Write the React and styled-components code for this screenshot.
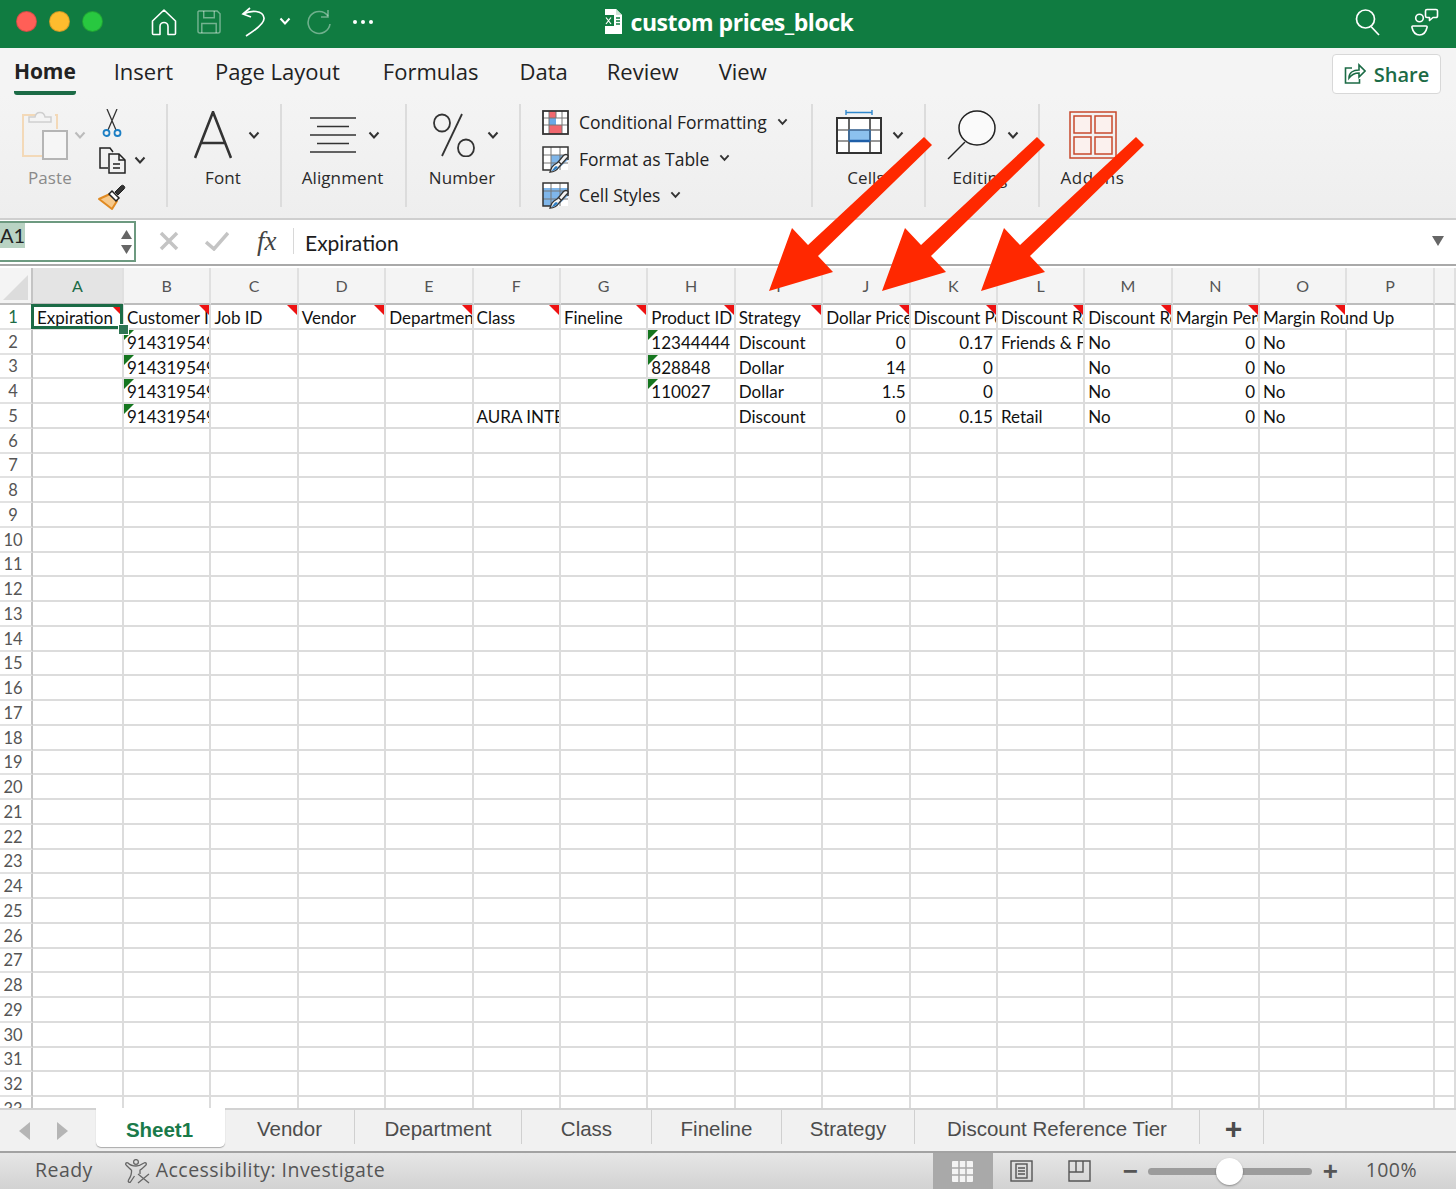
import React from "react";
import styled, { createGlobalStyle } from "styled-components";

const GlobalStyle = createGlobalStyle`
  html, body { margin: 0; padding: 0; background: #fff; }
  * { box-sizing: border-box; }
`;

const UI = `"Open Sans", "Noto Sans", sans-serif`;
const GREEN = "#107c41";

const Window = styled.div`
  position: relative;
  width: 1456px;
  height: 1189px;
  overflow: hidden;
  display: flex;
  flex-direction: column;
  font-family: ${UI};
`;

const TitleBar = styled.header`
  height: 48px;
  flex: none;
  background: ${GREEN};
  display: grid;
  grid-template-columns: 1fr auto 1fr;
  align-items: center;
  color: #fff;
`;
const TitleLeft = styled.div`
  display: flex;
  align-items: center;
  padding: 0 0 5px 16px;
`;
const Light = styled.span`
  width: 21px;
  height: 21px;
  border-radius: 50%;
  margin-right: 12px;
  background: ${({ $c }) => $c};
  border: 1px solid rgba(0, 0, 0, 0.18);
`;
const QuickTools = styled.div`
  display: flex;
  align-items: center;
  gap: 20px;
  margin-left: 36px;
`;
const QuickChevron = styled.span`
  display: flex;
  margin: 0 -5px 0 -8px;
`;
const TitleText = styled.div`
  display: flex;
  align-items: center;
  gap: 8px;
  padding-bottom: 5px;
  font-size: 23px;
  font-weight: 700;
  letter-spacing: -0.45px;
`;
const TitleRight = styled.div`
  display: flex;
  justify-content: flex-end;
  align-items: center;
  gap: 30px;
  padding: 0 17px 4px 0;
`;

const TabBar = styled.nav`
  height: 47px;
  flex: none;
  background: #f4f4f4;
  display: flex;
  align-items: flex-start;
  padding-left: 14px;
  position: relative;
`;
const RibbonTab = styled.div`
  height: 47px;
  padding-top: 7px;
  margin-right: ${({ $mr }) => $mr}px;
  font-size: ${({ $on }) => ($on ? "21px" : "22px")};
  line-height: 32px;
  color: #222;
  font-weight: ${({ $on }) => ($on ? 700 : 500)};
  border-bottom: ${({ $on }) => ($on ? `4px solid #1c6b46` : "none")};
  border-radius: 0 0 3px 3px;
  letter-spacing: ${({ $on }) => ($on ? "-0.1px" : "0")};
`;
const ShareButton = styled.button`
  margin: 6px 15px 0 auto;
  width: 109px;
  height: 40px;
  background: #fff;
  border: 1px solid #d8d8d8;
  border-radius: 4px;
  display: flex;
  align-items: center;
  justify-content: center;
  gap: 8px;
  font-family: ${UI};
  font-size: 20px;
  font-weight: 600;
  color: #1c6b46;
`;

const Ribbon = styled.section`
  height: 125px;
  flex: none;
  background: linear-gradient(#f4f4f4, #eeeeee);
  border-bottom: 2px solid #cfcfcf;
  padding-top: 9px;
  display: flex;
  align-items: flex-start;
`;
const Group = styled.div`
  width: ${({ $w }) => $w}px;
  height: 103px;
  flex: none;
  border-right: ${({ $last }) => ($last ? "none" : "2px solid #dcdcdc")};
  display: flex;
  flex-direction: column;
  align-items: center;
`;
const IconRow = styled.div`
  height: 62px;
  display: flex;
  align-items: ${({ $top }) => ($top ? "flex-start" : "center")};
  padding-top: ${({ $top }) => ($top ? "6px" : "0")};
  gap: ${({ $gap }) => $gap ?? 14}px;
  margin-left: ${({ $shift }) => $shift ?? 0}px;
`;
const MidChevron = styled.span`
  display: flex;
  margin-top: 21px;
`;
const GroupLabel = styled.div`
  font-size: 17px;
  line-height: 24px;
  color: ${({ $dim }) => ($dim ? "#8a8a8a" : "#2a2a2a")};
  letter-spacing: ${({ $wide }) => ($wide ? "0.6px" : "0.1px")};
  margin-left: ${({ $x }) => $x ?? 0}px;
`;
const ClipGroup = styled.div`
  width: 168px;
  height: 103px;
  flex: none;
  border-right: 2px solid #dcdcdc;
  display: flex;
  padding-left: 21px;
`;
const PasteCol = styled.div`
  width: 70px;
  display: flex;
  flex-direction: column;
`;
const PasteIcons = styled.div`
  height: 62px;
  display: flex;
  align-items: center;
  gap: 5px;
`;
const ClipTools = styled.div`
  margin-left: 7px;
  display: flex;
  flex-direction: column;
  align-items: flex-start;
  gap: 10px;
  padding-top: 5px;
`;
const ClipTool = styled.div`
  display: flex;
  align-items: center;
  gap: 8px;
  margin-left: ${({ $x }) => $x ?? 0}px;
`;
const StyleList = styled.div`
  display: flex;
  flex-direction: column;
  gap: 8.5px;
  padding: 4px 0 0 21px;
  width: 100%;
`;
const StyleRow = styled.div`
  display: flex;
  align-items: center;
  height: 28px;
  font-size: 17.5px;
  color: #222;
`;
const StyleName = styled.span`
  margin: 0 10px 0 10px;
`;

const FormulaBar = styled.section`
  height: 46px;
  flex: none;
  background: #fff;
  border-bottom: 2px solid #a9a9a9;
  display: flex;
  align-items: center;
  padding-bottom: 2px;
`;
const NameBox = styled.div`
  width: 136px;
  height: 41px;
  margin-top: 1px;
  border: 2px solid #6d9a80;
  border-left: none;
  display: flex;
  justify-content: space-between;
  font-family: "Lato", sans-serif;
  font-size: 20px;
  color: #222;
`;
const NameText = styled.span`
  height: 25px;
  line-height: 24px;
  background: #b9d3c3;
`;
const Spinner = styled.div`
  display: flex;
  flex-direction: column;
  justify-content: center;
  gap: 6px;
  padding-right: 2px;
`;
const FormulaActions = styled.div`
  display: flex;
  align-items: center;
  gap: 26px;
  margin-left: 23px;
`;
const FormulaDivider = styled.span`
  width: 1px;
  height: 26px;
  background: #d8d8d8;
  margin-left: 10px;
`;
const Fx = styled.span`
  font-family: "Liberation Serif", serif;
  font-style: italic;
  font-size: 27px;
  color: #444;
  width: 26px;
  margin-left: 2px;
`;
const FormulaValue = styled.div`
  margin: 3px 0 0 11px;
  flex: 1;
  font-family: "Lato", sans-serif;
  font-size: 21px;
  color: #1c1c1c;
`;
const Dropdown = styled.span`
  width: 0;
  height: 0;
  margin-right: 12px;
  border-left: 6px solid transparent;
  border-right: 6px solid transparent;
  border-top: 10px solid #666;
`;

const Sheet = styled.main`
  flex: 1;
  min-height: 0;
  overflow: hidden;
  margin-top: 2px;
  background: #fff;
  display: grid;
  grid-template-columns: 33px 91px repeat(15, 87.4px) 1fr;
  grid-template-rows: 37px;
  grid-auto-rows: 24.75px;
  font-family: "Lato", sans-serif;
`;
const Corner = styled.div`
  background: #f4f4f4;
  border-right: 2px solid #c4c4c4;
  border-bottom: 2px solid #bdbdbd;
  position: relative;
  &::after {
    content: "";
    position: absolute;
    left: 3px;
    top: 7px;
    border-left: 25px solid transparent;
    border-bottom: 25px solid #dcdcdc;
  }
`;
const ColHead = styled.div`
  background: ${({ $on }) => ($on ? "#e4e4e4" : "#f4f4f4")};
  border-right: 2px solid #e0e0e0;
  border-bottom: 2px solid #bdbdbd;
  display: flex;
  align-items: center;
  justify-content: center;
  font-size: 16px;
  padding-bottom: 1px;
  color: ${({ $on }) => ($on ? "#1c6b46" : "#555")};
`;
const RowHead = styled.div`
  background: #fff;
  border-right: 2px solid #c4c4c4;
  border-bottom: 2px solid #e2e2e2;
  display: flex;
  align-items: center;
  justify-content: center;
  padding: 1px 5px 0 0;
  font-size: 16.5px;
  color: ${({ $on }) => ($on ? "#1c6b46" : "#555")};
`;
const Cell = styled.div`
  position: relative;
  border-right: 2px solid #dcdcdc;
  border-bottom: 2px solid #dcdcdc;
  padding: 1px 3px 0 3px;
  font-size: 17px;
  line-height: 23px;
  color: #111;
  white-space: nowrap;
  overflow: ${({ $spill }) => ($spill ? "visible" : "hidden")};
  text-align: ${({ $right }) => ($right ? "right" : "left")};
  ${({ $spill }) => $spill && "border-right-color: transparent;"}
  &::before {
    content: ${({ $note }) => ($note ? '""' : "none")};
    position: absolute;
    top: 0;
    right: 0;
    border-left: 10px solid transparent;
    border-top: 10px solid #ee1111;
  }
  &::after {
    content: ${({ $flag }) => ($flag ? '""' : "none")};
    position: absolute;
    top: 0;
    left: 0;
    border-right: 10px solid transparent;
    border-top: 10px solid #15761f;
  }
`;
const Selection = styled.div`
  position: absolute;
  inset: -1px -1px -1px -2px;
  border: 3px solid #1c6b46;
  pointer-events: none;
`;
const Handle = styled.span`
  position: absolute;
  right: -7px;
  bottom: -7px;
  width: 11px;
  height: 11px;
  background: #2f7553;
  border: 1px solid #fff;
`;
const SelectedCell = styled(Cell)`
  overflow: visible;
  padding-left: 4px;
  z-index: 2;
  &::before {
    border-left-width: 7px;
    border-top-width: 7px;
    right: 2px;
    top: 2px;
  }
`;

const SheetTabs = styled.div`
  height: 43px;
  flex: none;
  background: #f1f1f1;
  border-top: 2px solid #d2d2d2;
  display: flex;
  align-items: flex-start;
  font-family: "Liberation Sans", sans-serif;
  font-size: 20.5px;
  color: #4c4c4c;
`;
const TabNav = styled.div`
  width: 96px;
  height: 41px;
  display: flex;
  align-items: center;
  justify-content: center;
  gap: 27px;
  padding-right: 10px;
  flex: none;
`;
const SheetTab = styled.div`
  width: ${({ $w }) => $w}px;
  flex: none;
  display: flex;
  align-items: center;
  justify-content: center;
  margin-top: ${({ $on }) => ($on ? "-2px" : "0")};
  height: ${({ $on }) => ($on ? "39px" : "34px")};
  padding: ${({ $on }) => ($on ? "4px 2px 0 0" : "4px 0 0 0")};
  background: ${({ $on }) => ($on ? "#fff" : "transparent")};
  color: ${({ $on }) => ($on ? "#1a7a4a" : "inherit")};
  font-weight: ${({ $on }) => ($on ? 700 : 400)};
  border-right: ${({ $on }) => ($on ? "none" : "1.5px solid #d0d0d0")};
  border-radius: ${({ $on }) => ($on ? "0 0 5px 5px" : "0")};
  box-shadow: ${({ $on }) => ($on ? "0 1px 1px #aaa" : "none")};
`;
const PlusTab = styled(SheetTab)`
  font-size: 30px;
  font-weight: 700;
  line-height: 1;
  padding-left: 4px;
`;

const StatusBar = styled.footer`
  height: 38px;
  flex: none;
  background: linear-gradient(#e6e6e6, #d2d2d2);
  border-top: 2px solid #a2a2a2;
  display: flex;
  align-items: center;
  padding-left: 35px;
  font-size: 19.5px;
  letter-spacing: 0.45px;
  color: #555;
`;
const StatusText = styled.span`
  padding-bottom: 3px;
`;
const Investigate = styled.div`
  display: flex;
  align-items: center;
  gap: 5px;
  margin-left: 32px;
`;
const ViewButton = styled.div`
  width: ${({ $w }) => $w}px;
  height: 36px;
  flex: none;
  display: flex;
  align-items: center;
  justify-content: center;
  background: ${({ $on }) => ($on ? "#a9a9a9" : "transparent")};
`;
const ViewRow = styled.div`
  margin-left: auto;
  display: flex;
  align-items: center;
`;
const ZoomRow = styled.div`
  display: flex;
  align-items: center;
  margin-left: 14px;
  gap: 11px;
  padding-right: 39px;
`;
const ZoomMark = styled.span`
  font-family: "Liberation Sans", sans-serif;
  font-weight: 700;
  font-size: 26px;
  line-height: 1;
  color: #555;
  width: 14px;
  text-align: center;
`;
const Slider = styled.div`
  position: relative;
  width: 164px;
  height: 7px;
  background: #9c9c9c;
  border-radius: 4px;
`;
const Thumb = styled.span`
  position: absolute;
  left: 68px;
  top: -10px;
  width: 27px;
  height: 27px;
  border-radius: 50%;
  background: #fff;
  box-shadow: 0 1px 2px rgba(0, 0, 0, 0.35);
`;
const ZoomValue = styled(StatusText)`
  margin-left: 18px;
`;

const Arrows = styled.svg`
  position: absolute;
  inset: 0;
  pointer-events: none;
`;

/* icons */
const Chevron = ({ c = "#333", s = 12 }) => (
  <svg width={s} height={s * 0.75} viewBox="0 0 12 9" fill="none" stroke={c} strokeWidth="2">
    <path d="M1.5 1.5 6 6.5l4.5-5" />
  </svg>
);
const HomeIcon = () => (
  <svg width="26" height="28" viewBox="0 0 26 28" fill="none" stroke="#fff" strokeWidth="1.6" strokeLinejoin="round">
    <path d="M1.5 13 13 2l11.5 11v12.5a1 1 0 0 1-1 1H17v-8a4 4 0 0 0-8 0v8H2.500a1 1 0 0 1-1-1z" />
  </svg>
);
const SaveIcon = () => (
  <svg width="24" height="24" viewBox="0 0 25 25" fill="none" stroke="#fff" strokeOpacity=".42" strokeWidth="1.5">
    <path d="M2 1h19l3 3v18a2 2 0 0 1-2 2H3a2 2 0 0 1-2-2V2z" />
    <path d="M7 1v7h11V1M5 24V14h15v10" />
  </svg>
);
const UndoIcon = () => (
  <svg width="26" height="30" viewBox="0 0 26 30" fill="none" stroke="#fff" strokeWidth="1.7">
    <path d="M9 1 2 7l8 3" />
    <path d="M2 7c8-4 20-4 21 4 .6 5-10 13-18 18" />
  </svg>
);
const RedoIcon = () => (
  <svg width="26" height="26" viewBox="0 0 26 26" fill="none" stroke="#fff" strokeOpacity=".4" strokeWidth="1.6">
    <path d="M22 7A11 11 0 1 0 24 15" />
    <path d="M22 1v7h-7" />
  </svg>
);
const Dots = () => (
  <svg width="22" height="6" viewBox="0 0 22 6" fill="#fff">
    <circle cx="3" cy="3" r="2" />
    <circle cx="11" cy="3" r="2" />
    <circle cx="19" cy="3" r="2" />
  </svg>
);
const DocIcon = () => (
  <svg width="20" height="25" viewBox="0 0 20 25">
    <path d="M2 0h11l6 6v19H2z" fill="#fff" />
    <path d="M13 0v6h6z" fill="#cfe5d8" />
    <rect x="0" y="6" width="11" height="11" fill={GREEN} />
    <path d="M3 8.500 8 15M8 8.500 3 15" stroke="#fff" strokeWidth="1.2" />
    <path d="M13 9h4M13 12h4M13 15h4" stroke={GREEN} strokeWidth="1.300" />
  </svg>
);
const SearchIcon = () => (
  <svg width="26" height="28" viewBox="0 0 26 28" fill="none" stroke="#fff" strokeWidth="1.700">
    <circle cx="10.500" cy="11" r="9" />
    <path d="m16 18.500 8 8.500" />
  </svg>
);
const PeopleIcon = () => (
  <svg width="28" height="28" viewBox="0 0 28 28" fill="none" stroke="#fff" strokeWidth="1.600" strokeLinejoin="round">
    <circle cx="8.500" cy="10" r="3.800" />
    <path d="M2 18h13c1 0 1.300.6 1 1.500C15 24 12 27 8.500 27S2 24 1 19.500C.8 18.600 1 18 2 18z" />
    <path d="M16 1.500h9a1.500 1.500 0 0 1 1.500 1.500v5A1.500 1.500 0 0 1 25 9.500h-3l-3.500 3v-3H16A1.500 1.500 0 0 1 14.500 8V3A1.500 1.500 0 0 1 16 1.500z" />
  </svg>
);
const ShareIcon = () => (
  <svg width="22" height="22" viewBox="0 0 22 22" fill="none" stroke="#1c6b46" strokeWidth="1.600">
    <path d="M8 5H1.500v15h14v-4" />
    <path d="M5 15c0-5 4-8 10-8V2l6 6-6 6V10c-4 0-7 1-10 5z" fill="#fff" />
  </svg>
);
const PasteIcon = () => (
  <svg width="48" height="50" viewBox="0 0 48 50" fill="none">
    <path d="M16 5H2v41h22" stroke="#f3d9b8" strokeWidth="2" />
    <path d="M34 5h2v14" stroke="#f3d9b8" strokeWidth="2" />
    <path d="M8 12V7h6c1-6 9-6 10 0h6v5z" fill="#f4f4f4" stroke="#cfcfcf" strokeWidth="1.500" />
    <rect x="22" y="21" width="24" height="28" fill="#f6f6f6" stroke="#b5b5b5" strokeWidth="2" />
  </svg>
);
const ScissorsIcon = () => (
  <svg width="20" height="28" viewBox="0 0 20 28" fill="none">
    <path d="M5 0l9 21M15 0 6 21" stroke="#333" strokeWidth="1.300" />
    <circle cx="4.500" cy="24" r="3" stroke="#1c7fc4" strokeWidth="1.800" />
    <circle cx="15.500" cy="24" r="3" stroke="#1c7fc4" strokeWidth="1.800" />
  </svg>
);
const CopyIcon = () => (
  <svg width="28" height="27" viewBox="0 0 28 27" fill="none" stroke="#222" strokeWidth="1.500">
    <path d="M10 21H2V1h10l3 4" />
    <path d="M11 7h10l6 6v13H11z" fill="#f2f2f2" />
    <path d="M21 7v6h6M15 17h7M15 21h7" />
  </svg>
);
const BrushIcon = () => (
  <svg width="28" height="26" viewBox="0 0 28 26" fill="none">
    <path d="M1 15l11-5 7 7-5 8z" fill="#f7c98b" stroke="#e08a22" strokeWidth="2" strokeLinejoin="round" />
    <path d="M11 10l3-3 7 7-3 3z" fill="#fff" stroke="#222" strokeWidth="1.500" />
    <path d="M17 8l6-6c1-1 2-1 3 0s1 2 0 3l-6 6z" fill="#333" stroke="#222" strokeWidth="1" />
  </svg>
);
const FontIcon = () => (
  <svg width="38" height="48" viewBox="0 0 38 48" fill="none" stroke="#333" strokeWidth="2.600">
    <path d="M1 47 19 1l18 46M7 32h24" />
  </svg>
);
const AlignIcon = () => (
  <svg width="48" height="36" viewBox="0 0 48 36" stroke="#333" strokeWidth="1.500">
    <path d="M1 1h46M8 9.500h32M1 18h46M8 26.500h32M1 35h46" />
  </svg>
);
const PercentIcon = () => (
  <svg width="42" height="44" viewBox="0 0 42 44" fill="none" stroke="#333" strokeWidth="1.800">
    <ellipse cx="9" cy="10" rx="8" ry="8.500" />
    <ellipse cx="33" cy="35" rx="8" ry="8.500" />
    <path d="M29 1 9 43" />
  </svg>
);
const CondIcon = () => (
  <svg width="27" height="25" viewBox="0 0 27 25" fill="#fff">
    <rect x="1" y="1" width="25" height="23" />
    <rect x="7" y="1" width="7" height="7" fill="#f0676e" />
    <rect x="7" y="8" width="7" height="7" fill="#6aa9e6" />
    <rect x="14" y="8" width="6" height="7" fill="#fff" />
    <rect x="7" y="15" width="13" height="9" fill="#f0676e" />
    <path d="M14 1v7M1 8h25M1 15h25M7 1v23M20 1v23" stroke="#777" strokeWidth="1" />
    <rect x="1" y="1" width="25" height="23" fill="none" stroke="#333" strokeWidth="1.800" />
  </svg>
);
const TableStyleIcon = ({ full }) => (
  <svg width="27" height="28" viewBox="0 0 27 28" fill="#fff">
    <rect x="1" y="2" width="25" height="23" />
    <path d={full ? "M1 7h25v8L15 25H1z" : "M9 10h17v5L15 25H9z"} fill="#7fb6ea" />
    <path d="M1 10h25M1 18h25M9 2v23M18 2v23" stroke="#777" strokeWidth="1" fill="none" />
    <path d="M26 15V2H1v23h12" fill="none" stroke="#333" strokeWidth="1.500" />
    <path d="M21 11c1-1 3-2 4.500-1 1 1 .5 2-.5 3l-8 9c-2 3-5 5-9 5 1-2 1-5 4-7 2-1 4-2 5-4z" fill="#f4f4f4" stroke="#333" strokeWidth="1.300" />
    <path d="M16 16l3 3" stroke="#333" strokeWidth="1.300" />
    <path d="M9 26c2-1 3-4 5-5l2 1c-1 2-4 4-7 4z" fill="#2f7fc4" />
  </svg>
);
const CellsIcon = () => (
  <svg width="46" height="44" viewBox="0 0 46 44" fill="none">
    <path d="M10 2.500h26M10 0v5M36 0v5" stroke="#2f87cc" strokeWidth="1.400" />
    <rect x="1" y="8" width="44" height="35" fill="#fff" />
    <rect x="13" y="20" width="21" height="11" fill="#8cc1ee" />
    <path d="M1 20h44M1 31h44" stroke="#777" strokeWidth="1.600" />
    <path d="M13 8v35M34 8v35" stroke="#666" strokeWidth="2" />
    <path d="M13 31h21" stroke="#1f5fa8" strokeWidth="2.500" />
    <path d="M13 20h21M13 20v11M34 20v11" stroke="#2a6fb5" strokeWidth="1.200" />
    <rect x="1" y="8" width="44" height="35" stroke="#333" strokeWidth="2" />
  </svg>
);
const LensIcon = () => (
  <svg width="50" height="50" viewBox="0 0 50 50" fill="none" stroke="#222" strokeWidth="1.500">
    <ellipse cx="30" cy="18" rx="18" ry="17" fill="#fafafa" />
    <path d="M18 32 1 49" />
  </svg>
);
const AddInsIcon = () => (
  <svg width="48" height="48" viewBox="0 0 48 48" fill="none" stroke="#c8492d" strokeWidth="1.500">
    <rect x="1" y="1" width="46" height="46" />
    <rect x="5" y="5" width="17" height="17" fill="#fbf1ee" />
    <rect x="26" y="5" width="17" height="17" fill="#fbf1ee" />
    <rect x="5" y="26" width="17" height="17" fill="#fbf1ee" />
    <rect x="26" y="26" width="17" height="17" fill="#fbf1ee" />
  </svg>
);
const CloseMark = () => (
  <svg width="20" height="20" viewBox="0 0 20 20" stroke="#c4c4c4" strokeWidth="3.500">
    <path d="M2 2l16 16M18 2 2 18" />
  </svg>
);
const CheckMark = () => (
  <svg width="24" height="20" viewBox="0 0 24 20" fill="none" stroke="#c4c4c4" strokeWidth="3.500">
    <path d="M1 11l8 7L23 2" />
  </svg>
);
const Tri = ({ dir, c = "#666", w = 10, h = 8 }) => {
  const pts = {
    up: `0,${h} ${w},${h} ${w / 2},0`,
    down: `0,0 ${w},0 ${w / 2},${h}`,
    left: `${w},0 ${w},${h} 0,${h / 2}`,
    right: `0,0 0,${h} ${w},${h / 2}`,
  };
  return (
    <svg width={w} height={h} viewBox={`0 0 ${w} ${h}`}>
      <polygon points={pts[dir]} fill={c} />
    </svg>
  );
};
const AccessIcon = () => (
  <svg width="26" height="25" viewBox="0 0 26 25" fill="none" stroke="#666" strokeWidth="1.300" strokeLinejoin="round">
    <circle cx="11" cy="3" r="2.400" />
    <path d="M1 6c-1-2 1-3 2-2 2 2 5 3 8 3s5-1 8-3c1-1 3 0 2 2-2 2-4 4-6 5v4" />
    <path d="M6.500 11c.5 4-1 7-3 10-1 2 1 3 2 2l4-6" />
    <path d="M6.500 11C5 10 3 8 1 6" />
    <path d="M13 15l11 9M24 15l-11 9" />
  </svg>
);
const GridView = () => (
  <svg width="21" height="21" viewBox="0 0 21 21">
    <rect width="21" height="21" rx="1" fill="#f4f4f4" />
    <path d="M7 0v21M14 0v21M0 7h21M0 14h21" stroke="#a9a9a9" strokeWidth="1.500" />
  </svg>
);
const PageView = () => (
  <svg width="23" height="22" viewBox="0 0 23 22" fill="none" stroke="#555" strokeWidth="1.400">
    <rect x="1" y="1" width="21" height="20" />
    <rect x="6" y="4" width="11" height="14" />
    <path d="M8 8h7M8 11h7M8 14h7" />
  </svg>
);
const BreakView = () => (
  <svg width="23" height="22" viewBox="0 0 23 22" fill="none" stroke="#555" strokeWidth="1.400">
    <path d="M1 1h21v20H1zM1 12h14V1M8 1v11" />
  </svg>
);

const COLS = "ABCDEFGHIJKLMNOP".split("");
const RIBBON_TABS = [
  ["Home", 38], ["Insert", 42], ["Page Layout", 43], ["Formulas", 41], ["Data", 39], ["Review", 40], ["View", 0],
];
const HEADERS = [
  "Expiration", "Customer ID", "Job ID", "Vendor", "Department", "Class", "Fineline", "Product ID",
  "Strategy", "Dollar Price", "Discount Percent", "Discount Reference", "Discount Round", "Margin Percent", "Margin Round Up", "",
];
const ID = "9143195499";
// sparse body: col index -> [text, right aligned, green flag]
const DATA = {
  2: { 1: [ID, 0, 1], 7: ["12344444", 0, 1], 8: ["Discount"], 9: ["0", 1], 10: ["0.17", 1], 11: ["Friends & Family"], 12: ["No"], 13: ["0", 1], 14: ["No"] },
  3: { 1: [ID, 0, 1], 7: ["828848", 0, 1], 8: ["Dollar"], 9: ["14", 1], 10: ["0", 1], 12: ["No"], 13: ["0", 1], 14: ["No"] },
  4: { 1: [ID, 0, 1], 7: ["110027", 0, 1], 8: ["Dollar"], 9: ["1.5", 1], 10: ["0", 1], 12: ["No"], 13: ["0", 1], 14: ["No"] },
  5: { 1: [ID, 0, 1], 5: ["AURA INTERIORS"], 8: ["Discount"], 9: ["0", 1], 10: ["0.15", 1], 11: ["Retail"], 12: ["No"], 13: ["0", 1], 14: ["No"] },
};
const ROWS = Array.from({ length: 33 }, (_, i) => i + 1);
const TABS = [
  ["Sheet1", 129, true], ["Vendor", 130], ["Department", 167], ["Class", 130], ["Fineline", 130], ["Strategy", 133], ["Discount Reference Tier", 285],
];

const Arrow = ({ dx }) => (
  <polygon
    fill="#ff2800"
    transform={`translate(${dx} 0)`}
    points="924,137 932,145 818,256 833,272 769,291 792,228 808,245"
  />
);

export default function App() {
  return (
    <Window>
      <GlobalStyle />
      <TitleBar>
        <TitleLeft>
          <Light $c="#ff5f57" />
          <Light $c="#febc2e" />
          <Light $c="#28c840" />
          <QuickTools>
            <HomeIcon />
            <SaveIcon />
            <UndoIcon />
            <QuickChevron><Chevron c="#fff" /></QuickChevron>
            <RedoIcon />
            <Dots />
          </QuickTools>
        </TitleLeft>
        <TitleText>
          <DocIcon />
          custom prices_block
        </TitleText>
        <TitleRight>
          <SearchIcon />
          <PeopleIcon />
        </TitleRight>
      </TitleBar>

      <TabBar>
        {RIBBON_TABS.map(([t, mr], i) => (
          <RibbonTab key={t} $on={i === 0} $mr={mr}>{t}</RibbonTab>
        ))}
        <ShareButton>
          <ShareIcon />
          Share
        </ShareButton>
      </TabBar>

      <Ribbon>
        <ClipGroup>
          <PasteCol>
            <PasteIcons>
              <PasteIcon />
              <Chevron c="#bbb" />
            </PasteIcons>
            <GroupLabel $dim $x={7}>Paste</GroupLabel>
          </PasteCol>
          <ClipTools>
            <ClipTool $x={4}><ScissorsIcon /></ClipTool>
            <ClipTool>
              <CopyIcon />
              <Chevron />
            </ClipTool>
            <ClipTool><BrushIcon /></ClipTool>
          </ClipTools>
        </ClipGroup>
        <Group $w={114}>
          <IconRow $gap={16} $shift={6}><FontIcon /><Chevron /></IconRow>
          <GroupLabel $x={-2}>Font</GroupLabel>
        </Group>
        <Group $w={125}>
          <IconRow $gap={11} $shift={2}><AlignIcon /><Chevron /></IconRow>
          <GroupLabel $x={-2}>Alignment</GroupLabel>
        </Group>
        <Group $w={114}>
          <IconRow $gap={12} $shift={6}><PercentIcon /><Chevron /></IconRow>
          <GroupLabel $x={-2}>Number</GroupLabel>
        </Group>
        <Group $w={292}>
          <StyleList>
            <StyleRow><CondIcon /><StyleName>Conditional Formatting</StyleName><Chevron s={11} /></StyleRow>
            <StyleRow><TableStyleIcon /><StyleName>Format as Table</StyleName><Chevron s={11} /></StyleRow>
            <StyleRow><TableStyleIcon full /><StyleName>Cell Styles</StyleName><Chevron s={11} /></StyleRow>
          </StyleList>
        </Group>
        <Group $w={113}>
          <IconRow $top $gap={10} $shift={3}><CellsIcon /><MidChevron><Chevron /></MidChevron></IconRow>
          <GroupLabel $x={-5}>Cells</GroupLabel>
        </Group>
        <Group $w={114}>
          <IconRow $gap={10} $shift={2}><LensIcon /><Chevron /></IconRow>
          <GroupLabel $x={-4}>Editing</GroupLabel>
        </Group>
        <Group $w={106} $last>
          <IconRow><AddInsIcon /></IconRow>
          <GroupLabel $x={-1} $wide>Add-ins</GroupLabel>
        </Group>
      </Ribbon>

      <FormulaBar>
        <NameBox>
          <NameText>A1</NameText>
          <Spinner>
            <Tri dir="up" w={11} h={9} />
            <Tri dir="down" w={11} h={9} />
          </Spinner>
        </NameBox>
        <FormulaActions>
          <CloseMark />
          <CheckMark />
          <Fx>fx</Fx>
        </FormulaActions>
        <FormulaDivider />
        <FormulaValue>Expiration</FormulaValue>
        <Dropdown />
      </FormulaBar>

      <Sheet>
        <Corner />
        {COLS.map((c, i) => (
          <ColHead key={c} $on={i === 0}>{c}</ColHead>
        ))}
        <ColHead />
        {ROWS.map((r) => (
          <React.Fragment key={r}>
            <RowHead $on={r === 1}>{r}</RowHead>
            {COLS.map((c, i) => {
              if (r === 1 && i === 0) {
                return (
                  <SelectedCell key={c} $note>
                    {HEADERS[0]}
                    <Selection />
                    <Handle />
                  </SelectedCell>
                );
              }
              if (r === 1) {
                return (
                  <Cell key={c} $note={i < 15} $spill={i === 14}>
                    {HEADERS[i]}
                  </Cell>
                );
              }
              const d = DATA[r]?.[i];
              return (
                <Cell key={c} $right={d?.[1]} $flag={d?.[2]}>
                  {d?.[0]}
                </Cell>
              );
            })}
            <Cell />
          </React.Fragment>
        ))}
      </Sheet>

      <SheetTabs>
        <TabNav>
          <Tri dir="left" c="#b5b5b5" w={11} h={18} />
          <Tri dir="right" c="#b5b5b5" w={11} h={18} />
        </TabNav>
        {TABS.map(([t, w, on]) => (
          <SheetTab key={t} $w={w} $on={on}>{t}</SheetTab>
        ))}
        <PlusTab $w={64}>+</PlusTab>
      </SheetTabs>

      <StatusBar>
        <StatusText>Ready</StatusText>
        <Investigate>
          <AccessIcon />
          <StatusText>Accessibility: Investigate</StatusText>
        </Investigate>
        <ViewRow>
          <ViewButton $w={60} $on><GridView /></ViewButton>
          <ViewButton $w={58}><PageView /></ViewButton>
          <ViewButton $w={58}><BreakView /></ViewButton>
        </ViewRow>
        <ZoomRow>
          <ZoomMark>−</ZoomMark>
          <Slider><Thumb /></Slider>
          <ZoomMark>+</ZoomMark>
          <ZoomValue>100%</ZoomValue>
        </ZoomRow>
      </StatusBar>

      <Arrows width="1456" height="1189" viewBox="0 0 1456 1189">
        <Arrow dx={0} />
        <Arrow dx={113} />
        <Arrow dx={212} />
      </Arrows>
    </Window>
  );
}
